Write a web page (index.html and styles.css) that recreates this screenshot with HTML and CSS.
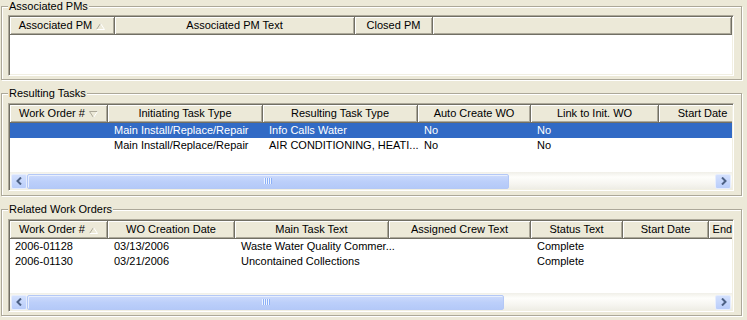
FILE: index.html
```html
<!DOCTYPE html>
<html>
<head>
    <title>Work Order Links</title>
    <link rel="stylesheet" href="styles.css">
</head>
<body>
    <div class="window">
        <fieldset class="group group-first">
            <legend>Associated PMs</legend>
            <div class="list list-pms">
                <div class="viewport">
                    <div class="head cols-pms">
                        <span>Associated PM <svg class="sort" width="9" height="7" viewBox="0 0 9 7"><path d="M0.5 6.5 L4.5 0.5" stroke="#aca899" fill="none"/><path d="M4.5 0.5 L8.5 6.5 L0.5 6.5" stroke="#fff" fill="none"/></svg></span>
                        <span>Associated PM Text</span>
                        <span>Closed PM</span>
                        <span></span>
                    </div>
                </div>
            </div>
        </fieldset>

        <fieldset class="group">
            <legend>Resulting Tasks</legend>
            <div class="list list-tasks">
                <div class="viewport">
                    <div class="head cols-tasks">
                        <span>Work Order # <svg class="sort" width="9" height="7" viewBox="0 0 9 7"><path d="M4.5 6.5 L0.5 0.5 L8.5 0.5" stroke="#aca899" fill="none"/><path d="M8.5 0.5 L4.5 6.5" stroke="#fff" fill="none"/></svg></span>
                        <span>Initiating Task Type</span>
                        <span>Resulting Task Type</span>
                        <span>Auto Create WO</span>
                        <span>Link to Init. WO</span>
                        <span>Start Date</span>
                    </div>
                    <div class="row cols-tasks selected">
                        <span></span>
                        <span>Main Install/Replace/Repair</span>
                        <span>Info Calls Water</span>
                        <span>No</span>
                        <span>No</span>
                        <span></span>
                    </div>
                    <div class="row cols-tasks">
                        <span></span>
                        <span>Main Install/Replace/Repair</span>
                        <span>AIR CONDITIONING, HEATI...</span>
                        <span>No</span>
                        <span>No</span>
                        <span></span>
                    </div>
                </div>
                <div class="hscroll">
                    <div class="arrow"><svg width="7" height="8" viewBox="0 0 7 8"><path d="M5 0.5 L1.5 4 L5 7.5" stroke="#4d6185" stroke-width="2" fill="none"/></svg></div>
                    <div class="thumb thumb-tasks"><i class="grip"></i></div>
                    <div class="track"></div>
                    <div class="arrow"><svg width="7" height="8" viewBox="0 0 7 8"><path d="M2 0.5 L5.5 4 L2 7.5" stroke="#4d6185" stroke-width="2" fill="none"/></svg></div>
                </div>
            </div>
        </fieldset>

        <fieldset class="group">
            <legend>Related Work Orders</legend>
            <div class="list list-orders">
                <div class="viewport">
                    <div class="head cols-orders">
                        <span>Work Order # <svg class="sort" width="9" height="7" viewBox="0 0 9 7"><path d="M0.5 6.5 L4.5 0.5" stroke="#aca899" fill="none"/><path d="M4.5 0.5 L8.5 6.5 L0.5 6.5" stroke="#fff" fill="none"/></svg></span>
                        <span>WO Creation Date</span>
                        <span>Main Task Text</span>
                        <span>Assigned Crew Text</span>
                        <span>Status Text</span>
                        <span>Start Date</span>
                        <span>End Date</span>
                    </div>
                    <div class="row cols-orders">
                        <span>2006-01128</span>
                        <span>03/13/2006</span>
                        <span>Waste Water Quality Commer...</span>
                        <span></span>
                        <span>Complete</span>
                        <span></span>
                        <span></span>
                    </div>
                    <div class="row cols-orders">
                        <span>2006-01130</span>
                        <span>03/21/2006</span>
                        <span>Uncontained Collections</span>
                        <span></span>
                        <span>Complete</span>
                        <span></span>
                        <span></span>
                    </div>
                </div>
                <div class="hscroll">
                    <div class="arrow"><svg width="7" height="8" viewBox="0 0 7 8"><path d="M5 0.5 L1.5 4 L5 7.5" stroke="#4d6185" stroke-width="2" fill="none"/></svg></div>
                    <div class="thumb thumb-orders"><i class="grip"></i></div>
                    <div class="track"></div>
                    <div class="arrow"><svg width="7" height="8" viewBox="0 0 7 8"><path d="M2 0.5 L5.5 4 L2 7.5" stroke="#4d6185" stroke-width="2" fill="none"/></svg></div>
                </div>
            </div>
        </fieldset>
    </div>
</body>
</html>
```

FILE: styles.css
```css
body {
    margin: 0;
    background: #ece9d8;
    font: 11px "Liberation Sans", Arial, sans-serif;
    color: #000;
}

.window {
    width: 747px;
    height: 320px;
    overflow: hidden;
}

.group {
    margin: 7px 5px 0 1px;
    padding: 3px 7px 4px 6px;
    border: 1px solid #aca899;
    box-shadow: inset 1px 1px #fff, 1px 1px #fff;
    min-width: 0;
}

.group-first {
    margin-top: 0;
    padding-top: 2px;
    padding-bottom: 3px;
}

.group:last-child {
    padding-bottom: 3px;
}

.group legend {
    padding: 0 1px;
    line-height: 13px;
    background: #ece9d8;
}

.list {
    display: flex;
    flex-direction: column;
    border-top: 1px solid #aca899;
    border-left: 1px solid #aca899;
    border-right: 1px solid #fff;
    border-bottom: 1px solid #fff;
    box-shadow: inset 1px 1px #716f64, inset -1px -1px #f1efe2;
    padding: 1px;
    background: #fff;
}

.list-pms { height: 57px; }
.list-tasks { height: 84px; }
.list-orders { height: 89px; }

.viewport {
    flex: 1;
    overflow: hidden;
}

.head, .row {
    display: grid;
    width: max-content;
    min-width: 100%;
    white-space: nowrap;
}

.cols-pms { grid-template-columns: 105px 240px 78px 1fr; }
.cols-tasks { grid-template-columns: 98px 155px 155px 113px 128px 88px; }
.cols-orders { grid-template-columns: 98px 127px 154px 142px 92px 86px 54px; }

.head span {
    box-sizing: border-box;
    height: 18px;
    line-height: 16px;
    text-align: center;
    overflow: hidden;
    background: #ece9d8;
    border-right: 1px solid #716f64;
    border-bottom: 1px solid #716f64;
    box-shadow: inset 1px 1px #fff, inset -1px -1px #aca899;
}

.sort {
    vertical-align: -1px;
    margin-left: 1px;
}

.row span {
    height: 15px;
    line-height: 15px;
    padding-left: 6px;
}

.row span:first-child {
    padding-left: 5px;
}

.row.selected {
    background: #316ac5;
    color: #fff;
}

.hscroll {
    display: flex;
    align-items: center;
    height: 17px;
    background: linear-gradient(#f0efe8, #fefefb 30%, #f6f5f0 70%, #eeede5);
}

.arrow {
    box-sizing: border-box;
    width: 16px;
    height: 15px;
    margin: 1px 0 0 1px;
    display: flex;
    align-items: center;
    justify-content: center;
    border: 1px solid #e6edfd;
    border-radius: 2px;
    background: linear-gradient(#d3e0fd, #b9cdfa);
}

.arrow:last-child {
    margin: 1px 1px 0 0;
}

.thumb {
    box-sizing: border-box;
    height: 15px;
    margin-top: 1px;
    display: flex;
    align-items: center;
    justify-content: center;
    border: 1px solid #b4c8f6;
    border-radius: 2px;
    background: linear-gradient(#cddbfc, #bccffa 50%, #b4c9f8);
    box-shadow: inset 1px 1px #e8effd;
}

.thumb-tasks { width: 482px; }
.thumb-orders { width: 477px; }

.grip {
    width: 8px;
    height: 6px;
    background: repeating-linear-gradient(90deg, #eef4fe 0 1px, #8cb0f8 1px 2px);
}

.track {
    flex: 1;
}
```
